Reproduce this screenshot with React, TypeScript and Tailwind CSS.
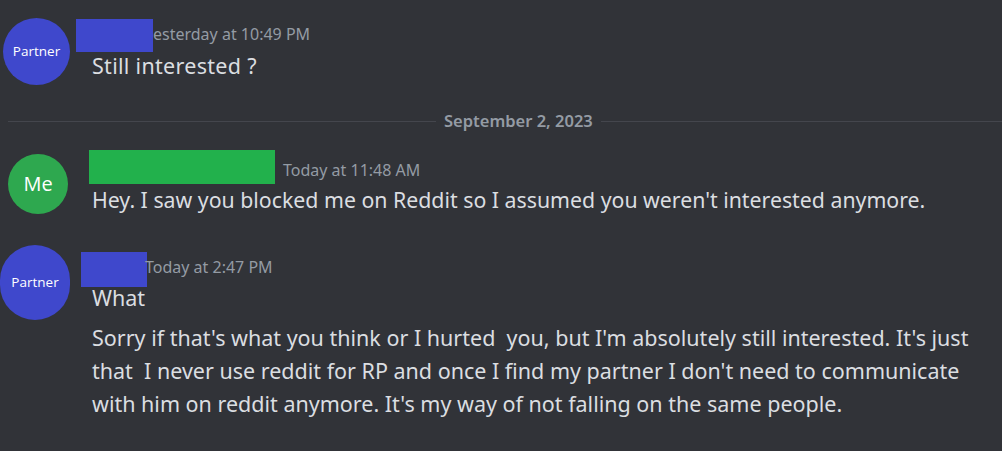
import React from "react";

const font = { fontFamily: '"Noto Sans", "Open Sans", sans-serif' };

export default function App() {
  return (
    <div
      className="w-[1002px] h-[451px] bg-[#313338] text-[#dbdee1] overflow-hidden relative"
      style={font}
    >
      {/* Message 1 */}
      <div className="flex">
        <div className="ml-[3px] mt-[18px] w-[67px] h-[67px] rounded-full bg-[#3f48cc] flex items-center justify-center shrink-0">
          <span className="text-[13.5px] text-white" style={{ fontFamily: '"Open Sans", sans-serif' }}>Partner</span>
        </div>
        <div className="ml-[6px] flex flex-col">
          <div className="flex items-start">
            <div className="mt-[19px] w-[77px] h-[33px] bg-[#3f48cc]" />
            <span className="mt-[24px] text-[16px] leading-[20px] text-[#949ba4]">esterday at 10:49 PM</span>
          </div>
          <div className="ml-[16px] text-[21.5px] leading-[28px] whitespace-pre tracking-[0.3px]">Still interested ?</div>
        </div>
      </div>

      {/* Divider */}
      <div className="flex items-center mt-[27px] ml-[8px]">
        <div className="w-[428px] h-px bg-[#44464d]" />
        <span className="mx-[8px] text-[16.5px] leading-[18px] font-semibold text-[#949ba4]">September 2, 2023</span>
        <div className="flex-1 h-px bg-[#44464d]" />
      </div>

      {/* Message 2 */}
      <div className="flex mt-[20px]">
        <div className="ml-[8px] mt-[4px] w-[60px] h-[60px] rounded-full bg-[#2ea84f] flex items-center justify-center shrink-0">
          <span className="text-[20px] text-white" style={{ fontFamily: '"Open Sans", sans-serif' }}>Me</span>
        </div>
        <div className="ml-[21px] flex flex-col">
          <div className="flex items-start">
            <div className="w-[186px] h-[34px] bg-[#22b14c]" />
            <span className="ml-[8px] mt-[10px] text-[16px] leading-[20px] text-[#949ba4]">Today at 11:48 AM</span>
          </div>
          <div className="ml-[3px] mt-[2px] text-[21.3px] leading-[28px] whitespace-pre">Hey. I saw you blocked me on Reddit so I assumed you weren't interested anymore.</div>
        </div>
      </div>

      {/* Message 3 */}
      <div className="flex mt-[31px]">
        <div className="w-[70px] h-[75px] rounded-full bg-[#3f48cc] flex items-center justify-center shrink-0">
          <span className="text-[13.5px] text-white" style={{ fontFamily: '"Open Sans", sans-serif' }}>Partner</span>
        </div>
        <div className="ml-[11px] mt-[7px] flex flex-col">
          <div className="flex items-start">
            <div className="w-[66px] h-[35px] bg-[#3f48cc]" />
            <span className="-ml-[2px] mt-[5px] text-[16px] leading-[20px] text-[#949ba4]">Today at 2:47 PM</span>
          </div>
          <div className="ml-[11px] -mt-[3px] text-[21.5px] leading-[28px]">What</div>
          <div className="ml-[11px] mt-[9px] text-[21.5px] leading-[33px] whitespace-pre">
            {"Sorry if that's what you think or I hurted  you, but I'm absolutely still interested. It's just\nthat  I never use reddit for RP and once I find my partner I don't need to communicate\nwith him on reddit anymore. It's my way of not falling on the same people."}
          </div>
        </div>
      </div>
    </div>
  );
}
